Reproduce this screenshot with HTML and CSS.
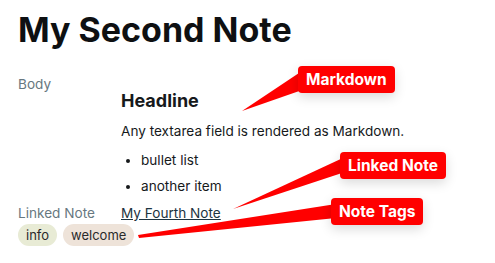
FILE: index.html
```html
<!DOCTYPE html>
<html lang="en">
<head>
  <meta charset="UTF-8">
  <title>My Second Note</title>
  <link rel="stylesheet" href="styles.css">
</head>
<body>

  <!-- Note view -->
  <div class="note">
    <h1 class="note-title">My Second Note</h1>

    <div class="field">
      <div class="field-label">Body</div>
      <div class="field-value markdown">
        <h3>Headline</h3>
        <p>Any textarea field is rendered as Markdown.</p>
        <ul>
          <li>bullet list</li>
          <li>another item</li>
        </ul>
      </div>
    </div>

    <div class="field linked">
      <div class="field-label">Linked Note</div>
      <div class="field-value"><a href="#">My Fourth Note</a></div>
    </div>

    <div class="tags">
      <span class="tag tag-info">info</span>
      <span class="tag tag-welcome">welcome</span>
    </div>
  </div>

  <!-- Annotations -->
  <svg class="pointers" width="495" height="263" viewBox="0 0 495 263">
    <polygon points="299,73 305,89 242,111" fill="#ff0000"/>
    <polygon points="345,157 345,172 233,209" fill="#ff0000"/>
    <polygon points="336,204 336,218 139,238 138,235" fill="#ff0000"/>
  </svg>
  <div class="callout callout-markdown">Markdown</div>
  <div class="callout callout-linked">Linked Note</div>
  <div class="callout callout-tags">Note Tags</div>

</body>
</html>
```

FILE: styles.css
```css
body {
  font-family: Inter, "Noto Sans", sans-serif;
  margin: 0;
  background: #fff;
  color: #16191b;
  position: relative;
  width: 495px;
  height: 263px;
  overflow: hidden;
}
.note {
  padding: 10px 18px 0 18px;
}
.note-title {
  font-size: 34px;
  line-height: 40px;
  font-weight: 700;
  margin: 0 0 24px 0;
  color: #0e1012;
}
.field {
  display: grid;
  grid-template-columns: 103px 1fr;
  font-size: 13.6px;
  line-height: 20px;
}
.field-label {
  color: #677880;
}
.markdown {
  padding-top: 16px;
}
.markdown h3 {
  font-size: 18px;
  line-height: 22px;
  font-weight: 700;
  margin: 0 0 9px 0;
}
.markdown p {
  margin: 0 0 9px 0;
}
.markdown ul {
  margin: 0 0 7px 0;
  padding-left: 20px;
}
.markdown li {
  margin-bottom: 6px;
}
.markdown li:last-child {
  margin-bottom: 0;
}
.field-value a {
  color: #1c3340;
}
/* Tags */
.tags {
  display: flex;
  gap: 6px;
  margin-top: 1px;
}
.tag {
  font-size: 13px;
  line-height: 16px;
  padding: 3px 8px;
  border-radius: 11px;
  color: #2a2a2a;
}
.tag-info {
  background-color: #e8ebd5;
}
.tag-welcome {
  background-color: #eee3d9;
}
/* Annotations */
.pointers {
  position: absolute;
  left: 0;
  top: 0;
}
.callout {
  position: absolute;
  background-color: #ff0000;
  color: #fff;
  font-weight: 700;
  font-size: 15.5px;
  line-height: 19px;
  border-radius: 4px;
  padding: 4px 8px;
  box-shadow: 0 4px 12px rgba(0,0,0,0.15);
}
.callout-markdown {
  left: 298px;
  top: 66px;
}
.callout-linked {
  left: 340px;
  top: 152px;
}
.callout-tags {
  left: 331px;
  top: 198px;
}
```
